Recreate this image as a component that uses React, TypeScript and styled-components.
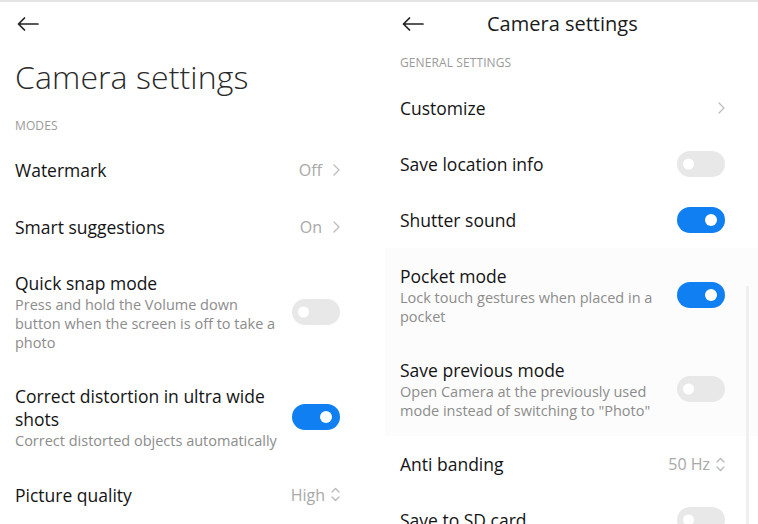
import React from 'react';
import styled, { createGlobalStyle } from 'styled-components';

const GlobalStyle = createGlobalStyle`
  html, body {
    margin: 0;
    padding: 0;
    background: #ffffff;
    font-family: 'Open Sans', 'Noto Sans', sans-serif;
    -webkit-font-smoothing: antialiased;
  }
  * { box-sizing: border-box; }
`;

const Frame = styled.div`
  width: 758px;
  height: 524px;
  overflow: hidden;
  display: flex;
  gap: 12px;
  border-top: 2px solid #e4e4e4;
`;

const Panel = styled.div`
  position: relative;
  width: 373px;
  flex: none;
  padding: 0 33px 0 15px;
`;

const TopBar = styled.div<{ $h: number }>`
  height: ${(p) => p.$h}px;
  display: flex;
  align-items: center;
  padding-left: 2px;
`;

const HeaderTitle = styled.div`
  margin-left: 63px;
  font-size: 20px;
  font-weight: 400;
  color: #1b1b1b;
  line-height: 24px;
`;

const BigTitle = styled.h1`
  margin: 11px 0 0;
  font-size: 32px;
  line-height: 40px;
  font-weight: 300;
  color: #2a2a2a;
  letter-spacing: 0.1px;
`;

const Section = styled.div<{ $top: number; $bottom: number }>`
  padding: ${(p) => p.$top}px 0 ${(p) => p.$bottom}px;
  font-size: 12px;
  line-height: 16px;
  color: #9a9a9a;
  text-transform: uppercase;
  letter-spacing: 0.1px;
`;

const Row = styled.div<{ $min: number; $shade?: boolean }>`
  min-height: ${(p) => p.$min}px;
  padding: 14px 0;
  display: flex;
  align-items: center;
  gap: 8px;
  ${(p) =>
    p.$shade
      ? `background: #fcfcfc; margin: 0 -33px 0 -15px; padding-left: 15px; padding-right: 33px;`
      : ''}
`;

const Texts = styled.div`
  flex: 1;
  min-width: 0;
  padding: 3px 0 2px;
`;

const Title = styled.div`
  font-size: 17.5px;
  line-height: 23px;
  font-weight: 500;
  color: #141414;
`;

const Desc = styled.div`
  font-size: 14.5px;
  line-height: 19px;
  color: #8c8c8c;
`;

const Value = styled.div<{ $gap: number }>`
  display: flex;
  align-items: center;
  gap: ${(p) => p.$gap}px;
  font-size: 16px;
  color: #a8a8a8;
  flex: none;
`;

const Track = styled.div<{ $on: boolean }>`
  width: 48px;
  height: 26px;
  border-radius: 13px;
  flex: none;
  position: relative;
  background: ${(p) => (p.$on ? '#0f7ff2' : '#e8e8e8')};
`;

const Knob = styled.span<{ $on: boolean }>`
  position: absolute;
  top: 50%;
  width: ${(p) => (p.$on ? 12 : 11)}px;
  height: ${(p) => (p.$on ? 12 : 11)}px;
  border-radius: 50%;
  background: #ffffff;
  transform: translateY(-50%);
  ${(p) => (p.$on ? 'right: 8px;' : 'left: 6px;')}
`;

const ScrollBar = styled.div`
  position: absolute;
  right: 9px;
  top: 284px;
  bottom: 0;
  width: 3px;
  background: #efefef;
`;

const BackArrow = () => (
  <svg width="22" height="14" viewBox="0 0 22 14" fill="none">
    <path d="M21 7H1.5M7.5 1L1.5 7l6 6" stroke="#222" strokeWidth="1.7" strokeLinecap="round" strokeLinejoin="round" />
  </svg>
);

const Chevron = () => (
  <svg width="7" height="12" viewBox="0 0 7 12" fill="none">
    <path d="M1 1l5 5-5 5" stroke="#bdbdbd" strokeWidth="1.3" strokeLinecap="round" strokeLinejoin="round" />
  </svg>
);

const UpDown = () => (
  <svg width="9" height="15" viewBox="0 0 9 15" fill="none">
    <path d="M1 5l3.5-3.5L8 5M1 10l3.5 3.5L8 10" stroke="#b8b8b8" strokeWidth="1.3" strokeLinecap="round" strokeLinejoin="round" />
  </svg>
);

const Toggle = ({ on }: { on: boolean }) => (
  <Track $on={on}>
    <Knob $on={on} />
  </Track>
);

type Item = {
  title: string;
  desc?: string;
  value?: string;
  kind: 'chevron' | 'updown' | 'toggle';
  on?: boolean;
  shade?: boolean;
};

const SettingRow = ({ item, min }: { item: Item; min: number }) => (
  <Row $min={min} $shade={item.shade}>
    <Texts>
      <Title>{item.title}</Title>
      {item.desc && <Desc>{item.desc}</Desc>}
    </Texts>
    {item.kind === 'toggle' ? (
      <Toggle on={!!item.on} />
    ) : (
      <Value $gap={item.kind === 'chevron' ? 11 : 6}>
        {item.value && <span>{item.value}</span>}
        {item.kind === 'chevron' ? <Chevron /> : <UpDown />}
      </Value>
    )}
  </Row>
);

const modes: Item[] = [
  { title: 'Watermark', value: 'Off', kind: 'chevron' },
  { title: 'Smart suggestions', value: 'On', kind: 'chevron' },
  {
    title: 'Quick snap mode',
    desc: 'Press and hold the Volume down button when the screen is off to take a photo',
    kind: 'toggle',
    on: false,
  },
  {
    title: 'Correct distortion in ultra wide shots',
    desc: 'Correct distorted objects automatically',
    kind: 'toggle',
    on: true,
  },
  { title: 'Picture quality', value: 'High', kind: 'updown' },
];

const general: Item[] = [
  { title: 'Customize', kind: 'chevron' },
  { title: 'Save location info', kind: 'toggle', on: false },
  { title: 'Shutter sound', kind: 'toggle', on: true },
  {
    title: 'Pocket mode',
    desc: 'Lock touch gestures when placed in a pocket',
    kind: 'toggle',
    on: true,
    shade: true,
  },
  {
    title: 'Save previous mode',
    desc: 'Open Camera at the previously used mode instead of switching to "Photo"',
    kind: 'toggle',
    on: false,
    shade: true,
  },
  { title: 'Anti banding', value: '50 Hz', kind: 'updown' },
  { title: 'Save to SD card', kind: 'toggle', on: false },
];

export default function App() {
  return (
    <>
      <GlobalStyle />
      <Frame>
        <Panel>
          <TopBar $h={44}>
            <BackArrow />
          </TopBar>
          <BigTitle>Camera settings</BigTitle>
          <Section $top={21} $bottom={7}>Modes</Section>
          {modes.map((m) => (
            <SettingRow key={m.title} item={m} min={57} />
          ))}
        </Panel>
        <Panel>
          <TopBar $h={43}>
            <BackArrow />
            <HeaderTitle>Camera settings</HeaderTitle>
          </TopBar>
          <Section $top={10} $bottom={9}>General settings</Section>
          {general.map((m) => (
            <SettingRow key={m.title} item={m} min={56} />
          ))}
          <ScrollBar />
        </Panel>
      </Frame>
    </>
  );
}
